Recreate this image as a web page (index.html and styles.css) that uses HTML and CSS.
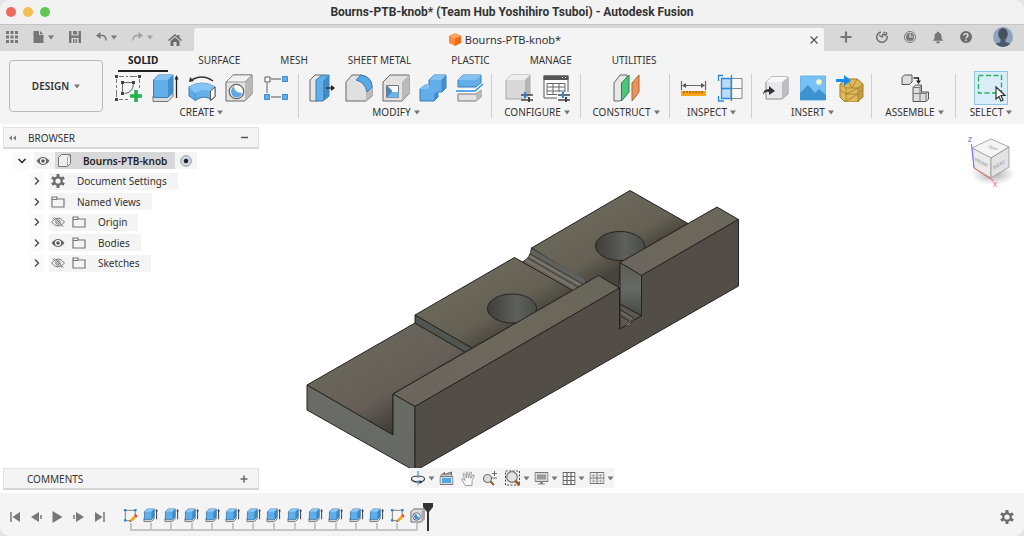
FILE: index.html
```html
<!DOCTYPE html>
<html lang="en">
<head>
  <meta charset="UTF-8">
  <title>Bourns-PTB-knob* (Team Hub Yoshihiro Tsuboi) - Autodesk Fusion</title>
  <link rel="stylesheet" href="styles.css">
</head>
<body>

<!-- Shared icons -->
<svg class="defs" aria-hidden="true">
  <defs>
    <symbol id="i-caret" viewBox="0 0 6 5"><path d="M0 0.500h6L3 4.500z" fill="currentColor"/></symbol>
    <symbol id="i-extrude" viewBox="0 0 16 16">
      <path d="M1 11v3.500h8l3-3V10" fill="#e6e6e6" stroke="#777" stroke-width="1"/>
      <path d="M1.500 4l3-3H12v8.500l-3 3H1.500z" fill="#5fade9" stroke="#2f6fa8" stroke-width=".8"/>
      <path d="M1.500 4l3-3H12L9 4z" fill="#8cc8f5"/>
      <path d="M9 4l3-3v8.500l-3 3z" fill="#3c87c6"/>
      <path d="M14.500 12V3" stroke="#333" stroke-width="1"/><path d="M13 3.500L14.500 1 16 3.500z" fill="#333"/>
    </symbol>
    <symbol id="i-sketch" viewBox="0 0 16 16">
      <path d="M3 2.500h10v5M2.500 3v10M3 13.500h5" fill="none" stroke="#777"/>
      <path d="M1 1h2.500v2.500H1zM12 1h2.500v2.500H12zM1 12h2.500v2.500H1z" fill="#2486dc"/>
      <path d="M8 12l4-4 2 2-4 4-3 1z" fill="#f5a11a"/><path d="M12 8l1.500-1.500 2 2L14 10z" fill="#e33"/>
      <path d="M7 15l.6-1.800 1.300 1.300z" fill="#333"/>
    </symbol>
    <symbol id="i-folder" viewBox="0 0 14 12">
      <path d="M1 11V1h5v2h7v8zM1 3.500h5" fill="none" stroke="#777" stroke-width="1.200"/>
    </symbol>
    <symbol id="i-eye" viewBox="0 0 14 10">
      <path d="M0.500 5Q7-3 13.500 5 7 13 0.500 5z" fill="#666"/><circle cx="7" cy="5" r="3" fill="#fff"/><circle cx="7" cy="5" r="1.800" fill="#555"/>
    </symbol>
    <symbol id="i-eyeoff" viewBox="0 0 14 10">
      <path d="M0.500 5Q7-3 13.500 5 7 13 0.500 5z" fill="none" stroke="#777"/><circle cx="7" cy="5" r="2.200" fill="none" stroke="#777"/><path d="M2 0l10 10" stroke="#f4f4f4" stroke-width="1.500"/><path d="M1.500 0.500l9.500 9M3.500 0.500l9 9" stroke="#666" stroke-width=".8"/>
    </symbol>
    <symbol id="i-right" viewBox="0 0 6 8"><path d="M1 0.500L4.500 4 1 7.500" fill="none" stroke="#444" stroke-width="1.300"/></symbol>
    <symbol id="i-gear" viewBox="0 0 14 14">
      <path d="M7 0v14M0.900 3.500l12.200 7M0.900 10.500l12.200-7" stroke="currentColor" stroke-width="3"/>
      <circle cx="7" cy="7" r="3.700" fill="#f4f4f4" stroke="currentColor" stroke-width="2.200"/>
    </symbol>
    <symbol id="i-boxhole" viewBox="0 0 16 16">
      <path d="M1 4l3-3h11v11l-3 3H1z" fill="#ddd" stroke="#666"/><path d="M12 4l3-3v11l-3 3z" fill="#aaa"/>
      <circle cx="7" cy="9" r="4" fill="#fff" stroke="#666"/><path d="M7 6a3 3 0 1 0 3 4 4 4 0 0 1-3-4z" fill="#3f93d8"/>
    </symbol>
  </defs>
</svg>

<div class="window">
  <header class="titlebar">
    <div class="lights">
      <button class="light red" aria-label="Close"></button>
      <button class="light yellow" aria-label="Minimize"></button>
      <button class="light green" aria-label="Zoom"></button>
    </div>
    <h1>Bourns-PTB-knob* (Team Hub Yoshihiro Tsuboi) - Autodesk Fusion</h1>
  </header>

  <!-- Quick access and document tab -->
  <div class="tabbar">
    <div class="quick">
      <button aria-label="Data panel"><svg width="12" height="12" viewBox="0 0 12 12"><path d="M0 0h3v3H0zM4.500 0h3v3h-3zM9 0h3v3H9zM0 4.500h3v3H0zM4.500 4.500h3v3h-3zM9 4.500h3v3H9zM0 9h3v3H0zM4.500 9h3v3h-3zM9 9h3v3H9z" fill="#777"/></svg></button>
      <button aria-label="File"><svg width="11" height="12" viewBox="0 0 11 12"><path d="M0.500 0H6v4h4.500v8h-10z" fill="#777"/><path d="M7 0l3.500 3.200H7z" fill="#777"/></svg><svg class="caret"><use href="#i-caret"/></svg></button>
      <button aria-label="Save"><svg width="12" height="12" viewBox="0 0 12 12"><path d="M0 0h12v12H0z" fill="#777"/><path d="M2.500 0h7v4.500h-7zM2.500 7h7v5h-7z" fill="#d8d8d8"/><path d="M4 0h4v3.500H4zM4 8h1.500v4H4zM6.500 8H8v4H6.500z" fill="#777"/></svg></button>
      <button aria-label="Undo"><svg width="11" height="10" viewBox="0 0 11 10"><path d="M2 3.500h4q4 0 4 5" fill="none" stroke="#777" stroke-width="1.500"/><path d="M0 3.500L4.500 0v7z" fill="#777"/></svg><svg class="caret"><use href="#i-caret"/></svg></button>
      <button class="dim" aria-label="Redo"><svg width="11" height="10" viewBox="0 0 11 10"><path d="M9 3.500H5q-4 0-4 5" fill="none" stroke="#777" stroke-width="1.500"/><path d="M11 3.500L6.500 0v7z" fill="#777"/></svg><svg class="caret"><use href="#i-caret"/></svg></button>
      <button class="home" aria-label="Home"><svg width="14" height="12" viewBox="0 0 14 12"><path d="M7 0L0 6l1 1 6-5 6 5 1-1-2.500-2.200V1h-2v1.200z" fill="#6d6d6d"/><path d="M2.500 7L7 3.300 11.500 7v5h-3V8h-3v4h-3z" fill="#6d6d6d"/></svg></button>
    </div>
    <div class="doctab">
      <span class="docname">
        <svg width="12" height="13" viewBox="0 0 12 13"><path d="M6 0l6 2.500L6 5.500 0 2.500z" fill="#ffa25c"/><path d="M0 2.500l6 3V13l-6-3z" fill="#ff8a3c"/><path d="M12 2.500l-6 3V13l6-3z" fill="#f26a14"/></svg>
        Bourns-PTB-knob*
      </span>
      <button class="close" aria-label="Close tab"><svg width="8" height="8" viewBox="0 0 8 8"><path d="M0.500 0.500l7 7M7.500 0.500l-7 7" stroke="#555" stroke-width="1.200"/></svg></button>
    </div>
    <div class="account">
      <button aria-label="New tab"><svg width="12" height="12" viewBox="0 0 12 12"><path d="M6 0.500v11M0.500 6h11" stroke="#777" stroke-width="2.200"/></svg></button>
      <button aria-label="Extensions"><svg width="12" height="12" viewBox="0 0 12 12"><path d="M5 1a5.200 5.200 0 1 0 6 4M7.500 1.200l1.500.8" fill="none" stroke="#707070" stroke-width="1.500"/><path d="M3 4l3.500 2.500M6.500 6.500V3.500h3.500M10.500 1v2.500L9 5" fill="none" stroke="#707070" stroke-width="1.300"/></svg></button>
      <button aria-label="Job status"><svg width="12" height="12" viewBox="0 0 12 12"><circle cx="6" cy="6" r="5.500" fill="none" stroke="#777"/><circle cx="6" cy="6" r="4" fill="#777"/><path d="M6 3v3h3" fill="none" stroke="#ddd" stroke-width="1.200"/></svg></button>
      <button aria-label="Notifications"><svg width="12" height="13" viewBox="0 0 12 13"><path d="M6 0.500c1 0 1 .8 1 1.200 2 .6 2.500 2 2.500 4 0 2 .8 3 2 4H.5c1.200-1 2-2 2-4 0-2 .5-3.400 2.500-4 0-.4 0-1.200 1-1.200z" fill="#777"/><path d="M4 10.500h4a2 2 0 0 1-4 0z" fill="#777"/></svg></button>
      <button aria-label="Help"><svg width="12" height="12" viewBox="0 0 12 12"><circle cx="6" cy="6" r="6" fill="#6d6d6d"/><path d="M4 4.500c0-2.500 4-2.500 4 0C8 5.800 6 5.800 6 7.500M6 8.500V10" fill="none" stroke="#e6e6e6" stroke-width="1.400"/></svg></button>
      <button class="avatar" aria-label="Profile"><svg width="20" height="20" viewBox="0 0 20 20"><defs><clipPath id="av"><circle cx="10" cy="10" r="10"/></clipPath></defs><g clip-path="url(#av)"><path d="M0 0h20v20H0z" fill="#8fa3bd"/><ellipse cx="10" cy="7" rx="4.800" ry="6" fill="#46505f"/><path d="M7.500 11h5v4c3 1 5 1.500 6 3v3h-17v-3c1-1.500 3-2 6-3z" fill="#4c596b"/></g></svg></button>
    </div>
  </div>

  <!-- Ribbon -->
  <div class="ribbon">
    <button class="workspace">DESIGN <svg class="caret"><use href="#i-caret"/></svg></button>
    <div class="tools">
      <nav class="tabs">
        <button class="tab active">SOLID</button>
        <button class="tab">SURFACE</button>
        <button class="tab">MESH</button>
        <button class="tab">SHEET METAL</button>
        <button class="tab">PLASTIC</button>
        <button class="tab">MANAGE</button>
        <button class="tab">UTILITIES</button>
      </nav>
      <div class="groups">
        <div class="group">
          <div class="icons">
            <button aria-label="Create sketch"><svg viewBox="0 0 28 28"><path d="M5 2.500h5M12 2.500h2M16 2.500h7M2.500 5v4M2.500 11v3M2.500 16v7M25.500 5v4M25.500 11v3M5 25.500h4M11 25.500h3" fill="none" stroke="#777"/><path d="M8.500 18V8.500h10M19.500 10q-1 9-9 9.500" fill="none" stroke="#666"/><path d="M1 1h3v3H1zM24 1h3v3h-3zM1 24h3v3H1zM7 7h3v3H7zM18 7h3v3h-3zM7 18h3v3H7z" fill="#444"/><path d="M22 16v12M16 22h12" stroke="#22b14c" stroke-width="3.500"/></svg></button>
            <button aria-label="Extrude"><svg viewBox="0 0 28 28"><path d="M2 22v5.500h15l5-5V19" fill="#ddd" stroke="#777"/><path d="M2.500 6l5-5H22v17.500l-5 5H2.500z" fill="#61aee9" stroke="#3a7cb6"/><path d="M3 6l5-5h14l-5 5z" fill="#83c3f2"/><path d="M17 6l5-5v17.500l-5 5z" fill="#438fce"/><path d="M25.500 24V3" stroke="#222" stroke-width="1.300"/><path d="M23.500 5.500l2-4.500 2 4.500z" fill="#222"/></svg></button>
            <button aria-label="Revolve"><svg viewBox="0 0 28 28"><path d="M2 7q12-8 23 0" fill="none" stroke="#333" stroke-width="1.300"/><path d="M1 8l1-5 4 4z" fill="#333"/><path d="M1 13q13-8 26 0v10l-4.500 3.500-1-2q-7-3.500-14 2L1 22z" fill="#61aee9" stroke="#3a7cb6"/><path d="M1 13l6 6q7-5 15.500-2L27 13q-13-8-26 0z" fill="#84c3f2"/><path d="M7 19v7.500" stroke="#438fce"/><path d="M22.500 17l4.500-4v9.500l-4.500 4z" fill="#fff" stroke="#555"/></svg></button>
            <button aria-label="Hole"><svg viewBox="0 0 28 28"><path d="M1 8l7-7h19v19l-7 7H1z" fill="#e3e3e3" stroke="#666"/><path d="M20 8l7-7v19l-7 7z" fill="#b9b9b9"/><path d="M1 8l7-7h19l-7 7z" fill="#f1f1f1" stroke="#777" stroke-width=".7"/><circle cx="11.500" cy="17.500" r="7.200" fill="#fff" stroke="#666" stroke-width="1.300"/><path d="M9 12q0 7 8 7-1 4.500-5.500 4.500T6 18q0-4 3-6z" fill="#5ba9e6"/></svg></button>
            <button aria-label="Rectangular pattern"><svg viewBox="0 0 28 28"><path d="M9 5h10M5 9v10M9 23h10" stroke="#888" stroke-width="1.300"/><path d="M3 3h5v5H3z" fill="#fff" stroke="#555"/><path d="M20.500 2.500h5v5h-5zM2.500 20.500h5v5h-5zM20.500 20.500h5v5h-5z" fill="#5fb0ef" stroke="#3d8dcc"/></svg></button>
          </div>
          <button class="label">CREATE <svg class="caret"><use href="#i-caret"/></svg></button>
        </div>
        <div class="group">
          <div class="icons">
            <button aria-label="Press pull"><svg viewBox="0 0 28 28"><path d="M2 6l5-5h7v22l-5 4H2z" fill="#e8e8e8" stroke="#666"/><path d="M8 6l6-5h7v21l-6 5H8z" fill="#61aee9" stroke="#3a7cb6"/><path d="M15 7l6-6v21l-6 5z" fill="#3f8bca"/><path d="M18 14h6" stroke="#222" stroke-width="1.300"/><path d="M23 11l4 3-4 3z" fill="#222"/></svg></button>
            <button aria-label="Fillet"><svg viewBox="0 0 28 28"><path d="M1 8l6-7h9q11 2 11 12v9l-6 5H1z" fill="#e0e0e0" stroke="#666"/><path d="M21 18l6-5v9l-6 5z" fill="#bbb"/><path d="M11 6l5-5q11 2 11 12l-5 5Q20 8 11 6z" fill="#59a9e7" stroke="#3a7cb6"/></svg></button>
            <button aria-label="Shell"><svg viewBox="0 0 28 28"><path d="M1 8l7-7h19v19l-7 7H1z" fill="#e3e3e3" stroke="#666"/><path d="M20 8l7-7v19l-7 7z" fill="#b9b9b9"/><path d="M4.500 11.500h12v12h-12z" fill="#f8f8f8" stroke="#777"/><path d="M5 11.500l5 5V19l-5 4.500z" fill="#3d8acb"/><path d="M10 18h6.500v5.500H5z" fill="#6ab6ef"/></svg></button>
            <button aria-label="Combine"><svg viewBox="0 0 28 28"><path d="M1 15l5-4h4V6l5-5h12v13l-4 4h-4v5l-4 4H1z" fill="#61aee9" stroke="#3a7cb6"/><path d="M10 6l5-5h12l-4.500 5zM1 15l5-4h4v4z" fill="#82c2f2"/><path d="M22.500 6L27 1v13l-4.500 4zM15 20l4-3v6l-4 4z" fill="#438fce"/></svg></button>
            <button aria-label="Split body"><svg viewBox="0 0 28 28"><path d="M2 20h18l5-4v7l-5 4H2z" fill="#e3e3e3" stroke="#777"/><path d="M20 20l5-4v7l-5 4z" fill="#bbb"/><path d="M2 6l5-5h18v8l-5 4H2z" fill="#61aee9" stroke="#3a7cb6"/><path d="M2 6l5-5h18l-5 5z" fill="#82c2f2"/><path d="M0 17h19l8-7" fill="none" stroke="#fff" stroke-width="3.500"/><path d="M0 17h19l8-7" fill="none" stroke="#258ce6" stroke-width="1.500"/></svg></button>
          </div>
          <button class="label">MODIFY <svg class="caret"><use href="#i-caret"/></svg></button>
        </div>
        <div class="group">
          <div class="icons">
            <button aria-label="Configure"><svg viewBox="0 0 28 28"><path d="M1 6l5-5h19v19l-5 5H1z" fill="#d8d8d8" stroke="#aaa"/><path d="M1 6l5-5h19l-5 5z" fill="#eee"/><path d="M20 6l5-5v19l-5 5z" fill="#b5b5b5"/><path d="M16 21h12M16 26h12" stroke="#444" stroke-width="1.500"/><path d="M20 18v6" stroke="#2486dc" stroke-width="2"/><path d="M24 23v5" stroke="#444" stroke-width="2"/></svg></button>
            <button aria-label="Configuration table"><svg viewBox="0 0 28 28"><path d="M2 2h24v22H2z" fill="#fff" stroke="#555"/><path d="M1.500 1.500h25v4.500h-25z" fill="#555"/><path d="M20 3h1v1h-1zM23 3h1v1h-1z" fill="#fff"/><path d="M5 9.500h18v11H5zM5 13h18M5 17h18M11 9.500v11M17 9.500v11" fill="none" stroke="#666"/><path d="M15 18h13v10H15z" fill="#f4f4f4"/><path d="M16 21h12M16 26h12" stroke="#444" stroke-width="1.500"/><path d="M21 18v6" stroke="#2486dc" stroke-width="2"/><path d="M24 23v5" stroke="#444" stroke-width="2"/></svg></button>
          </div>
          <button class="label">CONFIGURE <svg class="caret"><use href="#i-caret"/></svg></button>
        </div>
        <div class="group">
          <div class="icons">
            <button aria-label="Offset plane"><svg viewBox="0 0 28 28"><path d="M2 9l6-8h7v18l-7 8H2z" fill="#e8e8e8" stroke="#666"/><path d="M9.500 9L17 1v17l-7.500 9z" fill="#4fc57c" stroke="#23874a"/><path d="M20 9l7-8v17l-7 9z" fill="#e8935c" stroke="#b9622c"/></svg></button>
          </div>
          <button class="label">CONSTRUCT <svg class="caret"><use href="#i-caret"/></svg></button>
        </div>
        <div class="group">
          <div class="icons">
            <button aria-label="Measure"><svg viewBox="0 0 28 28"><path d="M2.500 7v9M26.500 7v9M4 11.500h21" stroke="#666" stroke-width="1.200"/><path d="M3 11.500l4-2.500v5zM26 11.500L22 9v5z" fill="#555"/><path d="M2 17h25v5H2z" fill="#fba414"/><path d="M5 17v2.500M8 17v2M11 17v2.500M14 17v2M17 17v2.500M20 17v2M23 17v2.500" stroke="#6b4b14"/></svg></button>
            <button aria-label="Section analysis"><svg viewBox="0 0 28 28"><path d="M5 4.500h10v20H5z" fill="#b9dcf6"/><path d="M15 4.500h11v20H15zM15 14.500h11" fill="#f8f8f8" stroke="#888"/><path d="M5.500 4.500h10v20h-10zM5 14.500h10M15.500 1v26M7 1.500H2.500V7M2.500 22v5H8" fill="none" stroke="#278bdd" stroke-width="1.300"/></svg></button>
          </div>
          <button class="label">INSPECT <svg class="caret"><use href="#i-caret"/></svg></button>
        </div>
        <div class="group">
          <div class="icons">
            <button aria-label="Insert derive"><svg viewBox="0 0 28 28"><path d="M4 8l5-5h17v17l-6 5H4z" fill="#e9e9ed" stroke="#888"/><path d="M20 8l6-5v17l-6 5z" fill="#bdbdc4"/><path d="M4 8l5-5h17l-6 5z" fill="#f8f8fa"/><path d="M1 21q0-6 6-6v-3l6 5-6 4v-3q-4-1-6 3z" fill="#333"/></svg></button>
            <button aria-label="Insert canvas"><svg viewBox="0 0 28 28"><path d="M1.500 2h25v24h-25z" fill="#76c1f5" stroke="#6db3e6"/><path d="M1 19l8-8 7 8 4-4 7 6v5H1z" fill="#3d93cf"/><circle cx="20" cy="8" r="2.800" fill="#fdf5c4"/></svg></button>
            <button aria-label="Insert mesh"><svg viewBox="0 0 28 28"><path d="M4 10l7-5h10l6 5v13l-6 5H9l-5-5z" fill="#dfb85c" stroke="#a17a24"/><path d="M4 10l6 4h12l5-4M10 14v14M22 14v14M10 20h12M4 16l6 4M27 16l-5 4M10 27l12-7M10 20l12-6M11 5l5 9 5-9" fill="none" stroke="#a17a24" stroke-width=".8"/><path d="M22 14l5-4v13l-5 5z" fill="#b18832" opacity=".6"/><path d="M0 5h8V1l7 5.500L8 12V8H0z" fill="#168bf0"/></svg></button>
          </div>
          <button class="label">INSERT <svg class="caret"><use href="#i-caret"/></svg></button>
        </div>
        <div class="group">
          <div class="icons">
            <button aria-label="New component"><svg viewBox="0 0 28 28"><path d="M1 3.500L3.500 1H11v7l-2.500 2.500H1z" fill="#ddd" stroke="#555"/><path d="M12.500 4h5v3" fill="none" stroke="#222" stroke-width="1.300"/><path d="M15 6.500h5L17.500 10z" fill="#222"/><path d="M12 13.500l2.500-2.500h6v7h7v7L25 27.500H12z" fill="#ddd" stroke="#555"/><path d="M12 19.500h7l2-2M19 19.500v8M19 13.500l1.500-2.500M12 13.500h7v6h6l2-1.500M25 19.500v8" fill="none" stroke="#777"/></svg></button>
          </div>
          <button class="label">ASSEMBLE <svg class="caret"><use href="#i-caret"/></svg></button>
        </div>
        <div class="group">
          <div class="icons">
            <button class="selected" aria-label="Select"><svg viewBox="0 0 32 32"><path d="M3.500 3.500h23v17.500h-23z" fill="none" stroke="#27b35c" stroke-width="1.400" stroke-dasharray="5 2.500"/><path d="M21 15v12l3-2.500 2 4.500 2-1-2-4.500h4z" fill="#fff" stroke="#333" stroke-width="1.200"/></svg></button>
          </div>
          <button class="label">SELECT <svg class="caret"><use href="#i-caret"/></svg></button>
        </div>
      </div>
    </div>
  </div>

  <!-- Viewport -->
  <main class="viewport">
    <svg class="model" viewBox="0 124 1024 369" role="img" aria-label="3D model">
      <defs>
        <linearGradient id="hole" x1="0" x2="1"><stop offset="0" stop-color="#413e39"/><stop offset=".2" stop-color="#4a4843"/><stop offset=".6" stop-color="#5d605b"/><stop offset="1" stop-color="#4a4c48"/></linearGradient>
        <linearGradient id="top1" gradientUnits="userSpaceOnUse" x1="345" y1="340" x2="402" y2="434"><stop offset="0" stop-color="#6b675c"/><stop offset=".6" stop-color="#655f58"/><stop offset="1" stop-color="#36332e"/></linearGradient>
        <linearGradient id="top2" gradientUnits="userSpaceOnUse" x1="464" y1="286" x2="494" y2="338"><stop offset="0" stop-color="#6b675b"/><stop offset=".65" stop-color="#646054"/><stop offset="1" stop-color="#4b483f"/></linearGradient>
        <linearGradient id="top3" gradientUnits="userSpaceOnUse" x1="581" y1="218" x2="613" y2="273"><stop offset="0" stop-color="#6b675b"/><stop offset=".65" stop-color="#646054"/><stop offset="1" stop-color="#46433b"/></linearGradient>
        <linearGradient id="walltop" x1="0" x2="1"><stop offset="0" stop-color="#6b655e"/><stop offset=".5" stop-color="#6c685b"/><stop offset="1" stop-color="#68655a"/></linearGradient>
        <linearGradient id="front" x1="0" x2="1" y2="1"><stop offset="0" stop-color="#6a6b66"/><stop offset="1" stop-color="#666963"/></linearGradient>
        <linearGradient id="notch" x1="0" x2="0" y1="0" y2="1"><stop offset="0" stop-color="#5d5d57"/><stop offset=".5" stop-color="#666964"/><stop offset="1" stop-color="#454844"/></linearGradient>
      </defs>
      <g stroke="#24231f" stroke-width="1" stroke-linejoin="round">
        <path d="M307 385L415 323l50 29-72 42v41z" fill="url(#top1)"/>
        <path d="M415 315v8l50 29 7-4z" fill="#525651"/>
        <path d="M415 315l99.500-57.500L573 290l-101 58z" fill="url(#top2)"/>
        <path d="M522.500 262q8-4 9-14l57 34-15 9z" fill="#69655c"/>
        <path d="M531.500 248L630 190.500l58 33-68 39-1 26-20-13-12 7z" fill="url(#top3)"/>
        <ellipse cx="512" cy="308.500" rx="24.500" ry="14.500" fill="url(#hole)"/>
        <ellipse cx="620" cy="246" rx="24.500" ry="14.500" fill="url(#hole)"/>
      </g>
      <!-- groove between the second and third step -->
      <path d="M532 250.500l53 31" stroke="#5b6260" stroke-width="3"/>
      <path d="M530.500 254l53 30.500" stroke="#46463f" stroke-width="1.500"/>
      <path d="M529.500 256l53 30" stroke="#777a74" stroke-width="1.500"/>
      <path d="M528 258l52 30" stroke="#3f3d38" stroke-width="1"/>
      <path d="M526 260l50 29" stroke="#7b766d" stroke-width="2"/>
      <g stroke="#24231f" stroke-width="1" stroke-linejoin="round">
        <path d="M620 304l22 12-7 3-15 10z" fill="#5c5850"/>
        <path d="M620 262.500l22 13V316l-22-12z" fill="url(#notch)"/>
        <path d="M620 262.500L717 207l21.500 12.500-97 56z" fill="url(#walltop)"/>
        <path d="M393 394l205.500-118.500L619.500 288 415 406.500z" fill="url(#walltop)"/>
        <path d="M307 385l86 50v-41l22 12.500V471l-108-61z" fill="url(#front)"/>
        <path d="M415 406.500L619.500 288v41l9-4q5-5 13-9v-40.500l97-56V286L415 471z" fill="#524e47"/>
      </g>
      <path d="M621 310l13 8M621 316l8 5" stroke="#2d2b27"/>
      <path d="M621 312.500l11 6.500" stroke="#807a70"/>
    </svg>

    <section class="browser">
      <div class="panel">
        <button aria-label="Collapse"><svg width="7" height="6" viewBox="0 0 7 6"><path d="M3 0.500v5L0 3zM7 0.500v5L4 3z" fill="#777"/></svg></button>
        <h2>BROWSER</h2>
        <button aria-label="Minimize panel"><svg width="7" height="8" viewBox="0 0 7 8"><path d="M0 3.500h7" stroke="#555" stroke-width="1.500"/></svg></button>
      </div>
      <ul class="tree">
        <li class="root">
          <button class="toggle" aria-label="Collapse item"><svg width="8" height="6" viewBox="0 0 8 6"><path d="M0.500 1L4 4.500 7.500 1" fill="none" stroke="#222" stroke-width="1.500"/></svg></button>
          <div class="node">
            <svg class="eye"><use href="#i-eye"/></svg>
            <span class="name"><svg width="13" height="13" viewBox="0 0 13 13"><path d="M0.500 3.500l3-3h9v9l-3 3h-9z" fill="#eee" stroke="#777"/><path d="M9.500 3.500v9M9.500 3.500l3-3" stroke="#aaa"/></svg>Bourns-PTB-knob</span>
            <svg width="12" height="12" viewBox="0 0 12 12"><circle cx="6" cy="6" r="5.300" fill="#cfd8e8" stroke="#999"/><circle cx="6" cy="6" r="2.300" fill="#222"/></svg>
          </div>
        </li>
        <li>
          <button class="toggle" aria-label="Expand item"><svg width="6" height="8"><use href="#i-right"/></svg></button>
          <div class="node"><svg class="gear"><use href="#i-gear"/></svg><span>Document Settings</span></div>
        </li>
        <li>
          <button class="toggle" aria-label="Expand item"><svg width="6" height="8"><use href="#i-right"/></svg></button>
          <div class="node"><svg class="folder"><use href="#i-folder"/></svg><span>Named Views</span></div>
        </li>
        <li>
          <button class="toggle" aria-label="Expand item"><svg width="6" height="8"><use href="#i-right"/></svg></button>
          <div class="node"><svg class="eye"><use href="#i-eyeoff"/></svg><svg class="folder"><use href="#i-folder"/></svg><span>Origin</span></div>
        </li>
        <li>
          <button class="toggle" aria-label="Expand item"><svg width="6" height="8"><use href="#i-right"/></svg></button>
          <div class="node"><svg class="eye"><use href="#i-eye"/></svg><svg class="folder"><use href="#i-folder"/></svg><span>Bodies</span></div>
        </li>
        <li>
          <button class="toggle" aria-label="Expand item"><svg width="6" height="8"><use href="#i-right"/></svg></button>
          <div class="node"><svg class="eye"><use href="#i-eyeoff"/></svg><svg class="folder"><use href="#i-folder"/></svg><span>Sketches</span></div>
        </li>
      </ul>
    </section>

    <svg class="viewcube" width="52" height="56" viewBox="0 0 52 56" role="img" aria-label="View cube">
      <defs><radialGradient id="shade"><stop offset="0" stop-color="#777" stop-opacity=".6"/><stop offset="1" stop-color="#777" stop-opacity="0"/></radialGradient></defs>
      <ellipse cx="29" cy="40" rx="22" ry="11" fill="url(#shade)"/>
      <path d="M27 5l18 8-18 11L8 14z" fill="#f4f4f4" stroke="#888" stroke-width=".7"/>
      <path d="M8 14l19 10v20L10 34z" fill="#ebebeb" stroke="#999" stroke-width=".7"/>
      <path d="M45 13L27 24v20l18-11z" fill="#e2e2e2" stroke="#888" stroke-width=".7"/>
      <path d="M7.500 10L10 34" stroke="#6d6df0"/><path d="M10 34l20 13" stroke="#f06060"/>
      <text class="axis" x="4" y="8" fill="#5b5be8">Z</text><text class="axis" x="29" y="53" fill="#f04b4b">X</text>
      <text class="face" transform="matrix(.86 .4 -.8 .5 23 13)">TOP</text>
      <text class="face" transform="matrix(.8 .42 0 1 11 27)">FRONT</text>
      <text class="face" transform="matrix(.8 -.48 0 1 29 36)">RIGHT</text>
    </svg>

    <div class="panel comments">
      <h2>COMMENTS</h2>
      <button aria-label="Add comment"><svg width="8" height="8" viewBox="0 0 8 8"><path d="M4 0.500v7M0.500 4h7" stroke="#666" stroke-width="1.500"/></svg></button>
    </div>

    <div class="navbar">
      <button aria-label="Orbit"><svg width="15" height="15" viewBox="0 0 15 15"><ellipse cx="7.500" cy="8" rx="6.500" ry="3" fill="none" stroke="#333" stroke-width="1.200"/><path d="M7.500 0v7M7.500 9.500V15" stroke="#2f92e2" stroke-width="1.200" stroke-dasharray="4 1"/><path d="M9 9l3 2-3 2z" fill="#333"/></svg><svg class="caret"><use href="#i-caret"/></svg></button>
      <button class="plain" aria-label="Look at"><svg width="14" height="14" viewBox="0 0 14 14"><path d="M0.500 5.500h13v8H.5z" fill="#ddd" stroke="#777"/><path d="M2.500 7h9v5h-9z" fill="#4fa8ec"/><path d="M1 4.500l4-3v2l7-2.500v3.500" fill="#aaa" stroke="#666"/></svg></button>
      <button class="plain" aria-label="Pan"><svg width="15" height="15" viewBox="0 0 15 15"><path d="M5 14.500L1 8.500q0-1.500 2-.5l1.500 1.500L2.500 3q.5-1.500 1.500-.3L6 7 5.800 1.500q.7-1.500 1.500 0L8 7l1.500-5.500q1-1.200 1.500.2L10 7.500 12.500 4q1.400-.6 1.200.8L11.500 10v4.500z" fill="#f8f8f8" stroke="#888" stroke-width=".8"/></svg></button>
      <button class="plain" aria-label="Zoom"><svg width="15" height="15" viewBox="0 0 15 15"><circle cx="5" cy="7.500" r="4" fill="#ddd" stroke="#777" stroke-width="1.200"/><path d="M8 10.500l3.500 3.500" stroke="#8a5d25" stroke-width="2"/><path d="M12 0v5M9.500 2.500h5M9.500 7h5" stroke="#666"/></svg></button>
      <button aria-label="Fit"><svg width="16" height="16" viewBox="0 0 16 16"><path d="M1 1h14v14H1z" fill="none" stroke="#444" stroke-dasharray="2 1.500"/><circle cx="7.500" cy="7" r="5.300" fill="#e2e2e2" stroke="#777" stroke-width="1.200"/><path d="M11 11l4 4" stroke="#8a5d25" stroke-width="2.500"/></svg><svg class="caret"><use href="#i-caret"/></svg></button>
      <button aria-label="Display settings"><svg width="14" height="13" viewBox="0 0 14 13"><path d="M0.500 0.500h13v9H.5z" fill="#ddd" stroke="#777"/><path d="M2.500 2.500h9v5h-9z" fill="#999"/><path d="M5.500 9.500h3v2h2v1h-7v-1h2z" fill="#888"/></svg><svg class="caret"><use href="#i-caret"/></svg></button>
      <button aria-label="Grid and snaps"><svg width="13" height="13" viewBox="0 0 13 13"><path d="M0.500 0.500h12v12H.5zM4.500 0v13M8.500 0v13M0 4.500h13M0 8.500h13" fill="#f8f8f8" stroke="#666" stroke-width="1.200"/></svg><svg class="caret"><use href="#i-caret"/></svg></button>
      <button aria-label="Viewports"><svg width="15" height="12" viewBox="0 0 15 12"><path d="M0.500 0.500h14v11H.5z" fill="#eee" stroke="#777"/><path d="M7.500 0v12M0 6h15" stroke="#777"/><path d="M2 3.500h4M4 2v3M9 3.500h4M11 2v3M2 9h4M4 7.500v3M9 9h4M11 7.500v3" stroke="#aaa"/></svg><svg class="caret"><use href="#i-caret"/></svg></button>
    </div>
  </main>

  <!-- Timeline -->
  <footer class="timeline">
    <div class="playback">
      <button aria-label="Go to start"><svg width="11" height="10" viewBox="0 0 11 10"><path d="M1 0v10" stroke="#777" stroke-width="1.500"/><path d="M10 0v10L2.500 5z" fill="#777"/></svg></button>
      <button aria-label="Step back"><svg width="11" height="10" viewBox="0 0 11 10"><path d="M8 0v10L0 5z" fill="#777"/><path d="M10 3v4" stroke="#777" stroke-width="1.500"/></svg></button>
      <button aria-label="Play"><svg width="11" height="12" viewBox="0 0 11 12"><path d="M0.500 0v12l10-6z" fill="#777"/></svg></button>
      <button aria-label="Step forward"><svg width="11" height="10" viewBox="0 0 11 10"><path d="M3 0v10l8-5z" fill="#777"/><path d="M1 3v4" stroke="#777" stroke-width="1.500"/></svg></button>
      <button aria-label="Go to end"><svg width="11" height="10" viewBox="0 0 11 10"><path d="M10 0v10" stroke="#777" stroke-width="1.500"/><path d="M1 0v10l7.500-5z" fill="#777"/></svg></button>
    </div>
    <ol class="features">
      <li><svg><use href="#i-sketch"/></svg></li>
      <li><svg><use href="#i-extrude"/></svg></li>
      <li><svg><use href="#i-extrude"/></svg></li>
      <li><svg><use href="#i-extrude"/></svg></li>
      <li><svg><use href="#i-extrude"/></svg></li>
      <li><svg><use href="#i-extrude"/></svg></li>
      <li><svg><use href="#i-extrude"/></svg></li>
      <li><svg><use href="#i-extrude"/></svg></li>
      <li><svg><use href="#i-extrude"/></svg></li>
      <li><svg><use href="#i-extrude"/></svg></li>
      <li><svg><use href="#i-extrude"/></svg></li>
      <li><svg><use href="#i-extrude"/></svg></li>
      <li><svg><use href="#i-extrude"/></svg></li>
      <li><svg><use href="#i-sketch"/></svg></li>
      <li><svg><use href="#i-boxhole"/></svg></li>
    </ol>
    <svg class="marker" width="10" height="28" viewBox="0 0 10 28"><path d="M0 0h10v4L6 9v19H4V9L0 4z" fill="#333"/></svg>
    <button class="settings" aria-label="Timeline settings"><svg class="gear"><use href="#i-gear"/></svg></button>
  </footer>
</div>

</body>
</html>
```
FILE: styles.css
```css
* { box-sizing: border-box; }
body { margin: 0; background: #e4e4e4; font-family: "Noto Sans", "Open Sans", sans-serif; font-size: 10px; color: #333; }
button { margin: 0; padding: 0; border: 0; background: none; font: inherit; color: inherit; display: flex; align-items: center; cursor: pointer; }
svg { display: block; flex: none; }
h1, h2, ul, ol { margin: 0; padding: 0; font: inherit; list-style: none; }
.defs { position: absolute; width: 0; height: 0; }
.caret { width: 6px; height: 5px; color: #777; }

.window { display: flex; flex-direction: column; height: 100vh; background: #f4f4f4; border-radius: 10px; overflow: hidden; }

/* title bar */
.titlebar { display: grid; grid-template-columns: 1fr auto 1fr; align-items: center; height: 25px; padding: 0 6px; background: #f2f2f2; border-bottom: 1px solid #c4c4c4; }
.titlebar h1 { font-family: Roboto, Inter, sans-serif; font-size: 12px; font-weight: 700; }
.lights { display: flex; gap: 7px; }
.light { width: 10px; height: 10px; border-radius: 50%; }
.red { background: #ec6a5e; }
.yellow { background: #f4bf4f; }
.green { background: #61c554; }

/* document tab bar */
.tabbar { display: flex; height: 26px; background: #d8d8d8; }
.quick { display: flex; align-items: center; gap: 15px; width: 194px; padding: 0 0 2px 6px; }
.quick button { gap: 4px; }
.dim { opacity: .55; }
.home { padding-top: 5px; }
.doctab { flex: 1; display: flex; align-items: center; margin-top: 3px; padding: 0 6px; background: #f4f4f4; border-radius: 3px 3px 0 0; }
.docname { flex: 1; display: flex; align-items: center; justify-content: center; gap: 4px; font-size: 11px; }
.account { display: flex; align-items: center; gap: 16px; width: 200px; padding: 0 11px 2px 16px; }
.account button:first-child { margin-right: 8px; }
.avatar { margin-left: auto; }

/* ribbon */
.ribbon { display: flex; height: 73px; }
.workspace { width: 94px; margin: 9px 0 12px 9px; justify-content: center; gap: 5px; border: 1px solid #b9b9b9; border-radius: 4px; font-weight: 600; }
.tools { flex: 1; display: flex; flex-direction: column; }
.tabs { display: flex; gap: 20px; padding-left: 15px; }
.tab { height: 21px; padding: 0 10px 2px; border-bottom: 2px solid transparent; white-space: nowrap; }
.tab.active { border-color: #222; font-weight: 700; color: #222; }
.groups { display: grid; grid-template-columns: 196fr 193fr 89fr 89fr 82fr 120fr 84fr 68fr; }
.group { display: flex; flex-direction: column; align-items: center; height: 44px; margin-top: 2px; padding-left: 2px; border-right: 1px solid #cfcfcf; }
.group:last-child { border-right: 0; }
.icons { display: flex; align-items: center; justify-content: center; gap: 9px; height: 28px; }
.icons svg { width: 28px; height: 28px; }
.icons .selected { background: #d9eef8; border: 1px solid #8cc9e8; }
.selected svg { width: 32px; height: 32px; }
.label { gap: 3px; height: 14px; margin-top: 3px; white-space: nowrap; }

/* viewport */
.viewport { flex: 1; position: relative; background: #fff; padding: 3px; min-height: 0; }
.model { position: absolute; inset: 0; width: 100%; height: 100%; }
.browser { position: relative; width: 256px; }
.panel { display: flex; align-items: center; gap: 12px; width: 256px; height: 22px; padding: 0 10px 0 5px; background: #f4f4f4; border: 1px solid #e2e2e2; border-bottom: 2px solid #d5d5d5; }
.panel h2 { flex: 1; }
.comments { position: absolute; left: 3px; bottom: 3px; padding-left: 23px; }
.tree { display: grid; align-content: space-between; height: 120px; margin-top: 3px; }
.tree li { display: flex; gap: 5px; height: 17px; padding-left: 27px; }
.tree .root { padding-left: 10px; gap: 4px; }
.toggle { width: 14px; justify-content: center; background: #fafafa; }
.root .toggle { width: 17px; }
.node { display: flex; align-items: center; gap: 7px; padding: 0 11px 0 2px; background: #f4f4f4; }
.node span { padding-left: 5px; }
.root .node { padding: 0 5px 0 2px; gap: 5px; }
.root .name { display: flex; align-items: center; gap: 12px; height: 17px; padding: 0 8px 0 3px; background: #d8d8d8; font-weight: 600; color: #222; }
.eye { width: 14px; height: 10px; }
.folder { width: 14px; height: 12px; }
.gear { width: 14px; height: 14px; color: #6d6d6d; }
.viewcube { position: absolute; top: 10px; right: 8px; }
.axis { font-size: 7px; }
.face { font-size: 5px; fill: #888; }
.navbar { position: absolute; left: 50%; bottom: 5px; transform: translateX(-50%); display: flex; align-items: center; gap: 5px; height: 20px; padding: 0 1px; background: #f4f4f4; }
.navbar button { gap: 3px; }
.navbar .plain { margin-right: 2px; }

/* timeline */
.timeline { display: flex; height: 43px; padding: 0 10px; }
.playback { display: flex; align-items: center; gap: 10px; height: 48px; }
.features { display: grid; grid-template-columns: repeat(15, 1fr); width: 308px; margin: 15px 0 0 15px; }
.features svg { width: 15px; height: 15px; margin: 0 auto; }
.features li::after { content: ""; display: block; height: 6px; border-bottom: 2px solid #c6c6c6; background: linear-gradient(#c6c6c6, #c6c6c6) center / 2px 6px no-repeat; }
.features li:first-child::after { margin-left: 50%; background-position: left; }
.features li:last-child::after { margin-right: 50%; background-position: right; }
.marker { margin: 10px 0 0 -5px; }
.settings { margin-left: auto; height: 48px; }
```
